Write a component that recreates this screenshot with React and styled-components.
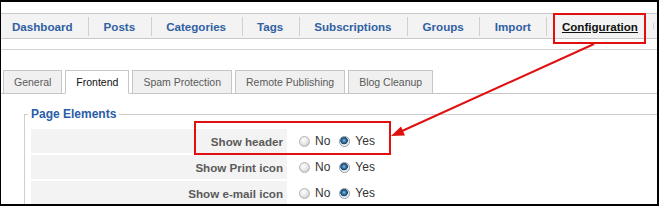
import React from 'react';
import styled, { createGlobalStyle } from 'styled-components';

const GlobalStyle = createGlobalStyle`
  html, body {
    margin: 0;
    padding: 0;
    background: #fff;
    font-family: "Liberation Sans", Arial, sans-serif;
  }
`;

const menuItems = [
  'Dashboard',
  'Posts',
  'Categories',
  'Tags',
  'Subscriptions',
  'Groups',
  'Import',
  'Configuration',
];

const tabs = ['General', 'Frontend', 'Spam Protection', 'Remote Publishing', 'Blog Cleanup'];

const rows = ['Show header', 'Show Print icon', 'Show e-mail icon'];

const Radio = ({ checked, label }) => (
  <RadioOption>
    <RadioDot $checked={checked} />
    <RadioLabel>{label}</RadioLabel>
  </RadioOption>
);

const App = () => {
  return (
    <>
      <GlobalStyle />
      <Frame>
        <MenuBar>
          {menuItems.map((item, i) => (
            <MenuItem key={item} $first={i === 0} $active={item === 'Configuration'}>
              {item}
            </MenuItem>
          ))}
          <MenuItem $first={false} />
        </MenuBar>
        <Divider />

        <TabBar>
          {tabs.map((tab) => (
            <Tab key={tab} $active={tab === 'Frontend'}>
              {tab}
            </Tab>
          ))}
        </TabBar>

        <Fieldset>
          <Legend>Page Elements</Legend>
          {rows.map((label) => (
            <Row key={label}>
              <LabelCell>{label}</LabelCell>
              <OptionCell>
                <Radio label="No" />
                <Radio checked label="Yes" />
              </OptionCell>
            </Row>
          ))}
        </Fieldset>

        <Annotations width="659" height="206" viewBox="0 0 659 206">
          <rect x="554" y="14" width="91" height="29" fill="none" stroke="#e01010" strokeWidth="2" />
          <rect x="195" y="122" width="195" height="32" fill="none" stroke="#e01010" strokeWidth="2" />
          <line x1="594" y1="44" x2="402" y2="131" stroke="#e01010" strokeWidth="2" />
          <polygon points="391,136 405,135.5 401,126.5" fill="#e01010" />
        </Annotations>
      </Frame>
    </>
  );
};

export default App;

const Frame = styled.div`
  position: relative;
  width: 659px;
  height: 206px;
  box-sizing: border-box;
  border-top: 2px solid #000;
  border-left: 1px solid #000;
  border-right: 2px solid #000;
  border-bottom: 2px solid #000;
  overflow: hidden;
  background: #fff;
`;

const MenuBar = styled.div`
  display: flex;
  align-items: center;
  margin-top: 11px;
  height: 24px;
  background: #f3f3f3;
  border-top: 1px solid #c9c9c9;
  border-bottom: 1px solid #c9c9c9;
  padding-left: 11px;
`;

const MenuItem = styled.div`
  position: relative;
  padding: 0 15.5px;
  padding-left: ${(p) => (p.$first ? '0' : '15.5px')};
  font-size: 11.6px;
  font-weight: bold;
  color: ${(p) => (p.$active ? '#111' : '#3160a3')};
  text-decoration: ${(p) => (p.$active ? 'underline' : 'none')};
  white-space: nowrap;

  &::before {
    content: ${(p) => (p.$first ? 'none' : "''")};
    position: absolute;
    left: 0;
    top: -3px;
    bottom: -3px;
    width: 1px;
    background: #d0d0d0;
  }
`;

const Divider = styled.div`
  margin-top: 10px;
  height: 1px;
  background: #d3d3d3;
`;

const TabBar = styled.div`
  display: flex;
  align-items: flex-end;
  gap: 3px;
  margin-top: 20px;
  padding-left: 2px;
  height: 23px;
  border-bottom: 1px solid #c6c6c6;
`;

const Tab = styled.div`
  box-sizing: border-box;
  height: ${(p) => (p.$active ? '24px' : '23px')};
  margin-bottom: ${(p) => (p.$active ? '-1px' : '0')};
  padding: 0 10px;
  display: flex;
  align-items: center;
  font-size: 10.5px;
  color: ${(p) => (p.$active ? '#111' : '#5a5a5a')};
  background: ${(p) => (p.$active ? '#fff' : '#f0f0f0')};
  border: 1px solid #c6c6c6;
  border-bottom: ${(p) => (p.$active ? '1px solid #fff' : 'none')};
  white-space: nowrap;
`;

const Fieldset = styled.fieldset`
  margin: 13px 0 0 23px;
  padding: 8px 0 0 6px;
  border: none;
  border-top: 1px solid #cfcfcf;
  border-left: 1px solid #cfcfcf;
`;

const Legend = styled.legend`
  padding: 0 3px;
  margin-left: -3px;
  font-size: 12px;
  line-height: 14px;
  font-weight: bold;
  color: #2a5ca8;
`;

const Row = styled.div`
  display: grid;
  grid-template-columns: 256px auto;
  height: 24px;
  margin-bottom: 2px;
`;

const LabelCell = styled.div`
  display: flex;
  align-items: center;
  justify-content: flex-end;
  padding-right: 4px;
  background: #f3f3f3;
  font-size: 11.6px;
  font-weight: bold;
  color: #5a5a5a;
`;

const OptionCell = styled.div`
  display: flex;
  align-items: center;
  padding-left: 12px;
  gap: 9px;
`;

const RadioOption = styled.label`
  display: flex;
  align-items: center;
  gap: 5px;
`;

const RadioDot = styled.span`
  box-sizing: border-box;
  width: 11px;
  height: 11px;
  border-radius: 50%;
  border: 1px solid ${(p) => (p.$checked ? '#8c9aa6' : '#b4b4b4')};
  background: ${(p) =>
    p.$checked
      ? 'radial-gradient(circle at 45% 40%, #8fc0e8 0, #2f6ea3 2px, #17425f 3.5px, #dfe6ec 4px, #f4f6f8 5px)'
      : 'radial-gradient(circle at 40% 35%, #ffffff 0, #e6e6e6 4px, #cfcfcf 6px)'};
`;

const RadioLabel = styled.span`
  font-size: 12px;
  color: #333;
`;

const Annotations = styled.svg`
  position: absolute;
  top: -2px;
  left: -1px;
  pointer-events: none;
`;
